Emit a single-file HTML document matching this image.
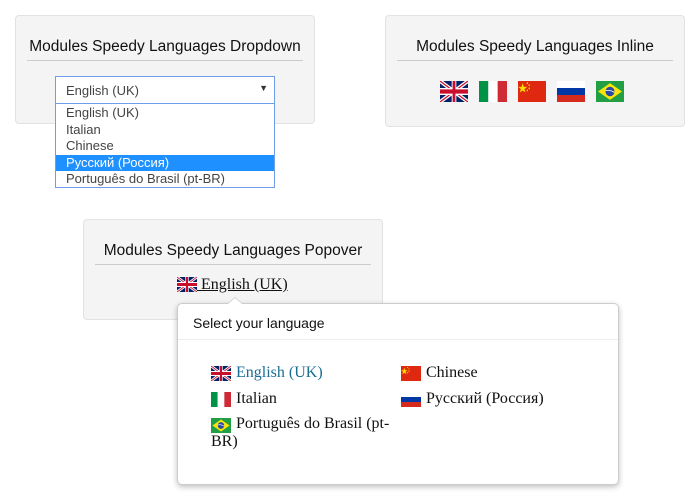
<!DOCTYPE html>
<html><head><meta charset="utf-8"><style>
body{margin:0;width:700px;height:500px;background:#fff;position:relative;overflow:hidden;font-family:"Liberation Sans",sans-serif}
.box{position:absolute;background:#f4f4f4;border:1px solid #e2e2e2;border-radius:4px;box-sizing:border-box}
.t{position:absolute;left:0;right:0;text-align:center;font-size:15.5px;color:#111}
.ln{position:absolute;height:1px;background:#ccc}
.ab{position:absolute}
svg.f{position:absolute}
.ser{font-family:"Liberation Serif",serif;font-size:16px;position:absolute}
</style></head><body>
<svg width="0" height="0" style="position:absolute">
<defs>
<symbol id="uk" viewBox="0 0 60 30" preserveAspectRatio="none"><rect width="60" height="30" fill="#012169"/><path d="M0,0L60,30M60,0L0,30" stroke="#fff" stroke-width="6"/><path d="M0,0L60,30M60,0L0,30" stroke="#C8102E" stroke-width="2"/><path d="M30,0V30M0,15H60" stroke="#fff" stroke-width="10"/><path d="M30,0V30M0,15H60" stroke="#C8102E" stroke-width="6"/></symbol>
<symbol id="it" viewBox="0 0 3 2" preserveAspectRatio="none"><rect width="1" height="2" fill="#009246"/><rect x="1" width="1" height="2" fill="#fff"/><rect x="2" width="1" height="2" fill="#CE2B37"/></symbol>
<symbol id="cn" viewBox="0 0 30 20" preserveAspectRatio="none"><rect width="30" height="20" fill="#DE2910"/><polygon points="5,2 6.2,5.6 9.8,5.6 6.9,7.7 8,11 5,9 2,11 3.1,7.7 0.2,5.6 3.8,5.6" fill="#FFDE00"/><circle cx="10" cy="2" r=".8" fill="#FFDE00"/><circle cx="12" cy="4" r=".8" fill="#FFDE00"/><circle cx="12" cy="7" r=".8" fill="#FFDE00"/><circle cx="10" cy="9" r=".8" fill="#FFDE00"/></symbol>
<symbol id="ru" viewBox="0 0 3 3" preserveAspectRatio="none"><rect width="3" height="1" fill="#fff"/><rect y="1" width="3" height="1" fill="#0039A6"/><rect y="2" width="3" height="1" fill="#D52B1E"/></symbol>
<symbol id="br" viewBox="0 0 28 20" preserveAspectRatio="none"><rect width="28" height="20" fill="#229e45"/><polygon points="14,2 26,10 14,18 2,10" fill="#f8e509"/><circle cx="14" cy="10" r="4.5" fill="#2b49a3"/><path d="M9.7,9.2Q14,8.2 18.3,10.8" stroke="#fff" stroke-width=".8" fill="none"/></symbol>
</defs></svg>

<div class="box" style="left:15px;top:15px;width:300px;height:109px">
<div class="t" style="top:22px">Modules Speedy Languages Dropdown</div>
<div class="ln" style="left:11px;right:11px;top:44px"></div>
</div>
<div class="ab" style="left:55px;top:76px;width:220px;height:28px;box-sizing:border-box;border:1px solid #6d9eea;background:#fff;font-size:13px;color:#444;padding:6px 10px">English (UK)<span style="position:absolute;right:6px;top:6px;font-size:9px;color:#333">▼</span></div>
<div class="ab" style="left:55px;top:103px;width:220px;height:85px;box-sizing:border-box;border:1px solid #6d9eea;background:#fff;font-size:13px;color:#444;line-height:16.5px;padding-top:1px">
<div style="padding-left:10px">English (UK)</div>
<div style="padding-left:10px">Italian</div>
<div style="padding-left:10px">Chinese</div>
<div style="padding-left:10px;background:#1e90ff;color:#fff">Русский (Россия)</div>
<div style="padding-left:10px">Português do Brasil (pt-BR)</div>
</div>

<div class="box" style="left:385px;top:15px;width:300px;height:112px">
<div class="t" style="top:22px">Modules Speedy Languages Inline</div>
<div class="ln" style="left:11px;right:11px;top:44px"></div>
</div>
<svg class="f" style="left:440px;top:81px" width="28" height="21"><use href="#uk"/></svg>
<svg class="f" style="left:479px;top:81px" width="28" height="21"><use href="#it"/></svg>
<svg class="f" style="left:518px;top:81px" width="28" height="21"><use href="#cn"/></svg>
<svg class="f" style="left:557px;top:81px" width="28" height="21"><use href="#ru"/></svg>
<svg class="f" style="left:596px;top:81px" width="28" height="21"><use href="#br"/></svg>

<div class="box" style="left:83px;top:219px;width:300px;height:101px">
<div class="t" style="top:22px">Modules Speedy Languages Popover</div>
<div class="ln" style="left:11px;right:11px;top:44px"></div>
</div>
<svg class="f" style="left:177px;top:277px" width="20" height="15"><use href="#uk"/></svg>
<div class="ser" style="left:197px;top:276px;color:#111;text-decoration:underline">&nbsp;English (UK)</div>

<div class="ab" style="left:177px;top:303px;width:442px;height:182px;box-sizing:border-box;background:#fff;border:1px solid #ccc;border-radius:5px;box-shadow:0 2px 6px rgba(0,0,0,.25)">
<div class="ab" style="left:15px;top:11px;font-size:14px;color:#111">Select your language</div>
<div class="ln" style="left:0;right:0;top:35px;background:#eee"></div>
</div>
<div class="ab" style="left:227px;top:297px;width:0;height:0;border-left:8px solid transparent;border-right:8px solid transparent;border-bottom:7px solid #ccc"></div>
<div class="ab" style="left:228px;top:298px;width:0;height:0;border-left:7px solid transparent;border-right:7px solid transparent;border-bottom:6px solid #fff"></div>

<svg class="f" style="left:211px;top:366px" width="20" height="15"><use href="#uk"/></svg>
<div class="ser" style="left:236px;top:364px;color:#1a6c94">English (UK)</div>
<svg class="f" style="left:211px;top:392px" width="20" height="15"><use href="#it"/></svg>
<div class="ser" style="left:236px;top:390px;color:#111">Italian</div>
<svg class="f" style="left:211px;top:418px" width="20" height="15"><use href="#br"/></svg>
<div class="ser" style="left:211px;top:415px;color:#111;width:185px;line-height:18px;text-indent:25px">Português do Brasil (pt-BR)</div>
<svg class="f" style="left:401px;top:366px" width="20" height="15"><use href="#cn"/></svg>
<div class="ser" style="left:426px;top:364px;color:#111">Chinese</div>
<svg class="f" style="left:401px;top:392px" width="20" height="15"><use href="#ru"/></svg>
<div class="ser" style="left:426px;top:390px;color:#111">Русский (Россия)</div>
</body></html>
